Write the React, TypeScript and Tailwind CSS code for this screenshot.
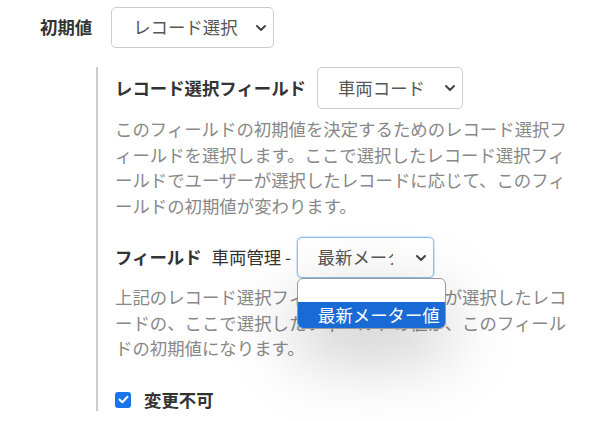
import React from "react";

function Chevron() {
    return (
        <svg width="12" height="8" viewBox="0 0 12 8" className="shrink-0">
            <path d="M2 2l4 4 4-4" fill="none" stroke="#444" strokeWidth="2" strokeLinecap="round" strokeLinejoin="round" />
        </svg>
    );
}

function FakeSelect(props: { label: string; className: string; textClass?: string; focused?: boolean }) {
    return (
        <div
            className={
                "flex items-center justify-between rounded-[5px] border bg-white text-[#555] pr-[6px] shrink-0 " +
                (props.focused ? "border-[#8ec2f2] shadow-[0_0_0_1px_rgba(142,194,242,0.35)] " : "border-[#ccc] ") +
                props.className
            }
        >
            <span className={"whitespace-nowrap overflow-hidden " + (props.textClass ?? "")}>{props.label}</span>
            <Chevron />
        </div>
    );
}

export default function App() {
    return (
        <div
            className="relative w-[596px] h-[421px] bg-white text-[17.4px] text-[#333] overflow-hidden"
            style={{ fontFamily: '"Noto Sans CJK JP", "Noto Sans", sans-serif' }}
        >
            <div className="flex items-center pt-[7px] pl-[40px] gap-[19px]">
                <span className="font-bold">初期値</span>
                <FakeSelect label="レコード選択" className="w-[163px] h-[41px] pl-[21px]" />
            </div>

            <div className="ml-[96px] mt-[19px] border-l-2 border-[#ccc] pl-[17px] h-[344px]">
                <div className="flex items-center gap-[11px]">
                    <span className="font-bold">レコード選択フィールド</span>
                    <FakeSelect label="車両コード" className="w-[146px] h-[42px] pl-[20px]" />
                </div>
                <p className="mt-[7px] w-[458px] text-[#888] leading-[25.5px]">
                    このフィールドの初期値を決定するためのレコード選択フィールドを選択します。ここで選択したレコード選択フィールドでユーザーが選択したレコードに応じて、このフィールドの初期値が変わります。
                </p>

                <div className="flex items-center mt-[19px]">
                    <span className="font-bold">フィールド</span>
                    <span className="ml-[10px] w-[85px] whitespace-nowrap">車両管理 -</span>
                    <FakeSelect label="最新メーター値" className="w-[137px] h-[41px] pl-[20px] pr-[6px]" textClass="w-[75px]" focused />
                </div>
                <p className="mt-[6px] w-[458px] text-[#888] leading-[25.5px]">
                    上記のレコード選択フィールドでユーザーが選択したレコードの、ここで選択したフィールドの値が、このフィールドの初期値になります。
                </p>

                <div className="flex items-center mt-[26px] gap-[13px]">
                    <span className="w-[16px] h-[16px] rounded-[3px] bg-[#1a73e8] flex items-center justify-center">
                        <svg width="11" height="9" viewBox="0 0 11 9">
                            <path d="M1.5 4.5l2.8 2.8L9.5 1.8" fill="none" stroke="white" strokeWidth="2" strokeLinecap="round" strokeLinejoin="round" />
                        </svg>
                    </span>
                    <span className="font-bold">変更不可</span>
                </div>
            </div>

            <div className="absolute left-[297px] top-[278px] w-[149px] h-[51px] rounded-[6px] bg-white border border-[#9a9a9a] overflow-hidden shadow-[0_24px_70px_rgba(0,0,0,0.25)]">
                <div className="h-[23px]" />
                <div className="h-[26px] bg-[#1a6ad6] text-white pl-[20px] leading-[26px] whitespace-nowrap">最新メーター値</div>
            </div>
        </div>
    );
}
